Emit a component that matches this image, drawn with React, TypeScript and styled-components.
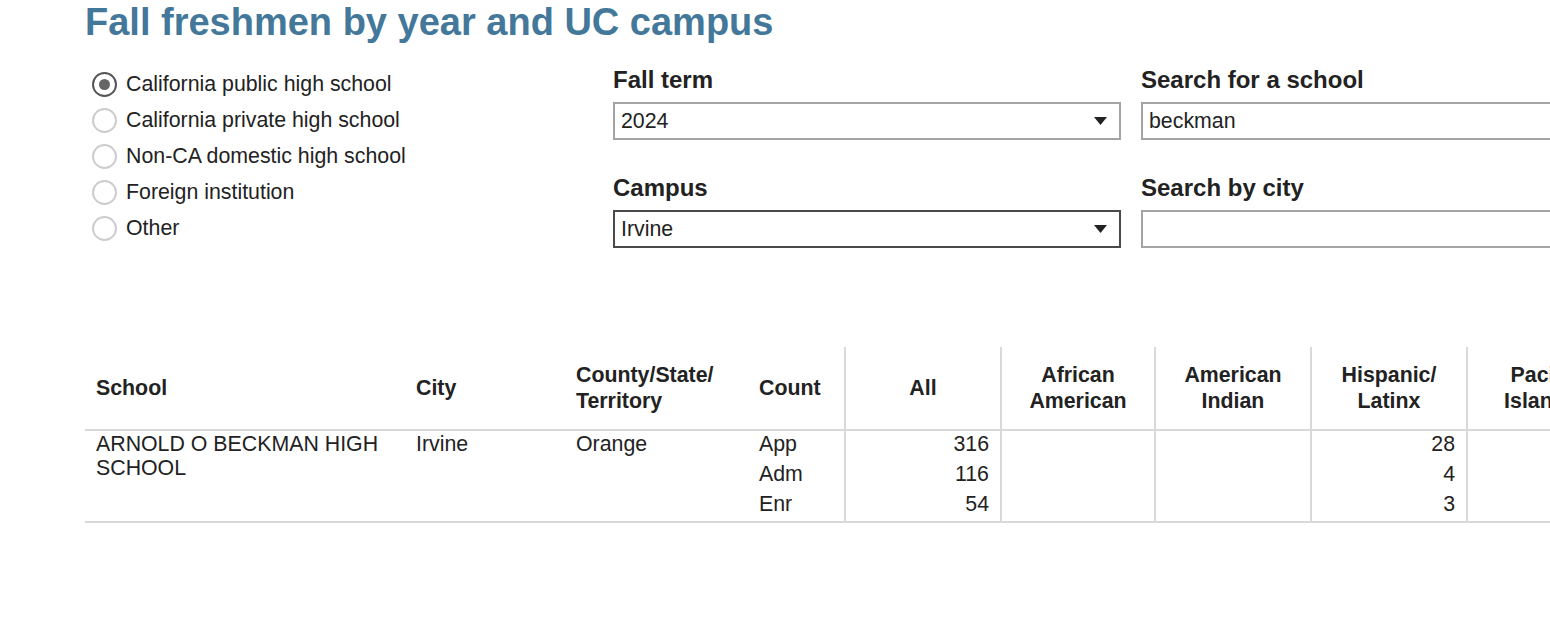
import React from 'react';
import styled, { createGlobalStyle } from 'styled-components';

const GlobalStyle = createGlobalStyle`
    html, body {
        margin: 0;
        padding: 0;
        overflow: hidden;
        background: #ffffff;
    }
    body {
        font-family: "Liberation Sans", Arial, Helvetica, sans-serif;
        color: #222222;
    }
`

const Page = styled.div`
    padding-left: 85px;
    width: 1465px;
`

const Title = styled.h1`
    margin: 0;
    font-size: 38px;
    line-height: 44px;
    font-weight: 700;
    color: #44789a;
    white-space: nowrap;
`

const Controls = styled.div`
    display: grid;
    grid-template-columns: 528px 528px 1fr;
    margin-top: 22px;
    height: 184px;
`

const RadioList = styled.div`
    display: flex;
    flex-direction: column;
    padding-left: 7px;
`

const RadioRow = styled.label`
    display: flex;
    align-items: center;
    height: 36px;
    font-size: 21.33px;
    white-space: nowrap;
    cursor: pointer;
`

const RadioCircle = styled.span<{ $checked: boolean }>`
    box-sizing: border-box;
    width: 25px;
    height: 25px;
    margin-right: 9px;
    border-radius: 50%;
    border: 2px solid ${({ $checked }) => ($checked ? '#555555' : '#cccccc')};
    display: flex;
    align-items: center;
    justify-content: center;

    &::after {
        content: '';
        width: 11px;
        height: 11px;
        border-radius: 50%;
        background: #666666;
        display: ${({ $checked }) => ($checked ? 'block' : 'none')};
    }
`

const FieldColumn = styled.div`
    display: flex;
    flex-direction: column;
    gap: 34px;
    min-width: 0;
`

const Field = styled.div`
    display: flex;
    flex-direction: column;
`

const FieldLabel = styled.div`
    font-size: 24px;
    line-height: 28px;
    font-weight: 700;
    margin-bottom: 8px;
    white-space: nowrap;
`

const SelectBox = styled.div<{ $active?: boolean }>`
    box-sizing: border-box;
    width: 508px;
    height: 38px;
    border: 2px solid ${({ $active }) => ($active ? '#4a4a4a' : '#a3a3a3')};
    display: flex;
    align-items: center;
    justify-content: space-between;
    padding: 0 12px 0 6px;
    font-size: 21.33px;
    background: #ffffff;
`

const TextInput = styled.input`
    box-sizing: border-box;
    width: 508px;
    height: 38px;
    border: 2px solid #a3a3a3;
    padding: 0 6px;
    font-family: inherit;
    font-size: 21.33px;
    color: #222222;
    outline: none;
`

const Caret = () => (
    <svg width="13" height="8" viewBox="0 0 13 8">
        <path d="M0 0 H13 L6.5 8 Z" fill="#222222" />
    </svg>
)

const TableWrap = styled.div`
    margin-top: 97px;
`

const Table = styled.table<{ $width: number }>`
    border-collapse: collapse;
    table-layout: fixed;
    width: ${({ $width }) => $width}px;
    font-size: 21.33px;
`

const HeadCell = styled.th<{ $numeric?: boolean }>`
    height: 83px;
    box-sizing: border-box;
    padding: 0 11px;
    font-weight: 700;
    line-height: 26px;
    vertical-align: middle;
    text-align: ${({ $numeric }) => ($numeric ? 'center' : 'left')};
    border-left: ${({ $numeric }) => ($numeric ? '2px solid #d9d9d9' : 'none')};
    border-bottom: 2px solid #d9d9d9;
    white-space: nowrap;
    overflow: hidden;
`

const BodyCell = styled.td<{ $numeric?: boolean; $last?: boolean }>`
    padding: 1px 11px 5px;
    line-height: 24px;
    vertical-align: top;
    text-align: ${({ $numeric }) => ($numeric ? 'right' : 'left')};
    border-left: ${({ $numeric }) => ($numeric ? '2px solid #d9d9d9' : 'none')};
    border-bottom: ${({ $last }) => ($last ? '2px solid #d9d9d9' : 'none')};
`

const radios = [
    'California public high school',
    'California private high school',
    'Non-CA domestic high school',
    'Foreign institution',
    'Other',
]

const columns: { label: React.ReactNode; width: number; numeric?: boolean }[] = [
    { label: 'School', width: 320 },
    { label: 'City', width: 160 },
    { label: <>County/State/<br />Territory</>, width: 183 },
    { label: 'Count', width: 97 },
    { label: 'All', width: 156, numeric: true },
    { label: <>African<br />American</>, width: 154, numeric: true },
    { label: <>American<br />Indian</>, width: 156, numeric: true },
    { label: <>Hispanic/<br />Latinx</>, width: 156, numeric: true },
    { label: <>Pacific<br />Islander</>, width: 156, numeric: true },
    { label: 'White', width: 156, numeric: true },
]

const tableWidth = columns.reduce((sum, c) => sum + c.width, 0)

const rows = [
    { count: 'App', all: '316', hispanic: '28' },
    { count: 'Adm', all: '116', hispanic: '4' },
    { count: 'Enr', all: '54', hispanic: '3' },
]

export default function App() {
    return (
        <>
            <GlobalStyle />
            <Page>
                <Title>Fall freshmen by year and UC campus</Title>

                <Controls>
                    <RadioList>
                        {radios.map((r, i) => (
                            <RadioRow key={r}>
                                <RadioCircle $checked={i === 0} />
                                {r}
                            </RadioRow>
                        ))}
                    </RadioList>

                    <FieldColumn>
                        <Field>
                            <FieldLabel>Fall term</FieldLabel>
                            <SelectBox>
                                <span>2024</span>
                                <Caret />
                            </SelectBox>
                        </Field>
                        <Field>
                            <FieldLabel>Campus</FieldLabel>
                            <SelectBox $active>
                                <span>Irvine</span>
                                <Caret />
                            </SelectBox>
                        </Field>
                    </FieldColumn>

                    <FieldColumn>
                        <Field>
                            <FieldLabel>Search for a school</FieldLabel>
                            <TextInput defaultValue="beckman" />
                        </Field>
                        <Field>
                            <FieldLabel>Search by city</FieldLabel>
                            <TextInput defaultValue="" />
                        </Field>
                    </FieldColumn>
                </Controls>

                <TableWrap>
                    <Table $width={tableWidth}>
                        <colgroup>
                            {columns.map((c, i) => (
                                <col key={i} style={{ width: c.width }} />
                            ))}
                        </colgroup>
                        <thead>
                            <tr>
                                {columns.map((c, i) => (
                                    <HeadCell key={i} $numeric={c.numeric}>{c.label}</HeadCell>
                                ))}
                            </tr>
                        </thead>
                        <tbody>
                            {rows.map((r, i) => {
                                const last = i === rows.length - 1;
                                return (
                                    <tr key={r.count}>
                                        {i === 0 && (
                                            <>
                                                <BodyCell rowSpan={3} $last>ARNOLD O BECKMAN HIGH SCHOOL</BodyCell>
                                                <BodyCell rowSpan={3} $last>Irvine</BodyCell>
                                                <BodyCell rowSpan={3} $last>Orange</BodyCell>
                                            </>
                                        )}
                                        <BodyCell $last={last}>{r.count}</BodyCell>
                                        <BodyCell $numeric $last={last}>{r.all}</BodyCell>
                                        <BodyCell $numeric $last={last}></BodyCell>
                                        <BodyCell $numeric $last={last}></BodyCell>
                                        <BodyCell $numeric $last={last}>{r.hispanic}</BodyCell>
                                        <BodyCell $numeric $last={last}></BodyCell>
                                        <BodyCell $numeric $last={last}></BodyCell>
                                    </tr>
                                );
                            })}
                        </tbody>
                    </Table>
                </TableWrap>
            </Page>
        </>
    );
}
